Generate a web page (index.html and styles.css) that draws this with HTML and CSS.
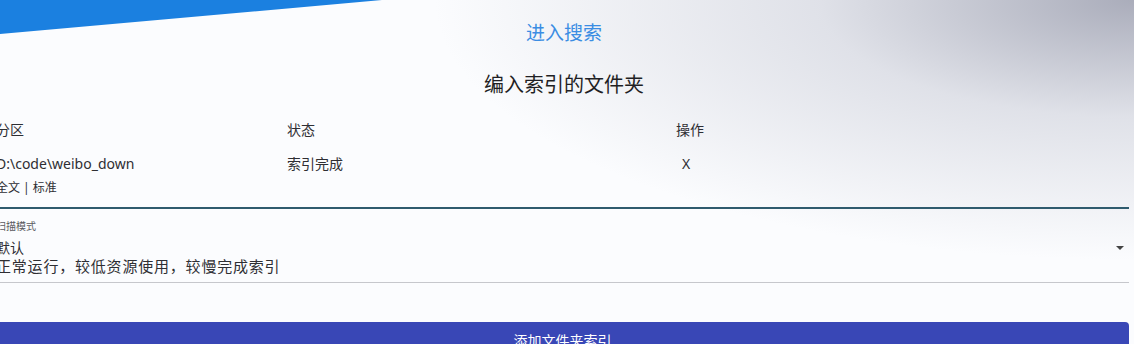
FILE: index.html
```html
<!DOCTYPE html>
<html lang="zh-CN">
<head>
<meta charset="utf-8">
<title>编入索引的文件夹</title>
<link rel="stylesheet" href="styles.css">
</head>
<body>
<div class="wedge"></div>
<div class="page">
  <div class="nav"><a class="nav-link" href="#">进入搜索</a></div>
  <h1 class="title">编入索引的文件夹</h1>
  <div class="table">
    <div class="row head">
      <div class="cell">分区</div>
      <div class="cell">状态</div>
      <div class="cell">操作</div>
    </div>
    <div class="row body-row">
      <div class="cell">
        <div class="path">D:\code\weibo_down</div>
        <div class="sub">全文 | 标准</div>
      </div>
      <div class="cell">索引完成</div>
      <div class="cell op">X</div>
    </div>
  </div>
  <div class="field">
    <div class="field-label">扫描模式</div>
    <div class="field-main">
      <div class="field-value">
        <div class="value">默认</div>
        <div class="desc">正常运行，较低资源使用，较慢完成索引</div>
      </div>
      <span class="arrow"></span>
    </div>
  </div>
  <button class="add-btn" type="button">添加文件夹索引</button>
</div>
</body>
</html>
```
FILE: styles.css
```css
html, body {
  margin: 0;
  height: 100%;
  overflow: hidden;
}
body {
  position: relative;
  font-family: "Noto Sans", "Noto Sans CJK SC", sans-serif;
  color: #2e2e33;
  background:
    radial-gradient(ellipse 700px 260px at 100% 0, rgba(150, 153, 170, 0.8), rgba(190, 193, 206, 0.45) 45%, rgba(255, 255, 255, 0) 100%),
    #fbfcfe;
}
.wedge {
  position: absolute;
  left: 0;
  top: 0;
  width: 382px;
  height: 34px;
  background: #1b80e0;
  clip-path: polygon(0 0, 100% 0, 0 100%);
}
.page {
  margin: 0 5px 0 -4px;
}
.nav {
  padding-top: 20px;
  text-align: center;
  line-height: 24px;
  padding-left: 3px;
}
.nav-link {
  font-family: "Noto Sans CJK SC", sans-serif;
  font-size: 19px;
  color: #3b8de3;
  text-decoration: none;
}
.title {
  margin: 24px 0 0;
  text-align: center;
  font-family: "Noto Sans CJK SC", sans-serif;
  font-weight: 400;
  font-size: 20px;
  line-height: 28px;
  color: #1f1f24;
  padding-left: 3px;
}
.table {
  margin-top: 22px;
}
.row {
  display: grid;
  grid-template-columns: 291px 389px 1fr;
  font-size: 14px;
  line-height: 20px;
}
.body-row {
  margin-top: 14px;
  padding-bottom: 11px;
  border-bottom: 2px solid #2f5b6e;
}
.op {
  padding-left: 6px;
}
.sub {
  margin-top: 6px;
  font-size: 12px;
  line-height: 16px;
}
.field {
  padding-top: 10px;
  padding-bottom: 7px;
  border-bottom: 1px solid #c6c7cc;
}
.field-label {
  font-size: 10px;
  line-height: 14px;
  color: #5a5a60;
}
.field-main {
  display: flex;
  margin-top: 6px;
}
.field-value {
  flex: 1;
  font-size: 14px;
  line-height: 18px;
}
.desc {
  font-size: 15px;
  letter-spacing: 0.8px;
}
.arrow {
  align-self: flex-start;
  margin: 7px 5px 0 0;
  width: 0;
  height: 0;
  border-left: 4px solid transparent;
  border-right: 4px solid transparent;
  border-top: 4px solid #444;
}
.add-btn {
  display: block;
  width: 100%;
  margin-top: 39px;
  height: 36px;
  border: none;
  border-radius: 4px;
  background: #3947b6;
  color: #fff;
  font-family: "Noto Sans CJK SC", sans-serif;
  font-size: 14px;
  line-height: 30px;
  padding: 0;
  text-align: center;
}
```
